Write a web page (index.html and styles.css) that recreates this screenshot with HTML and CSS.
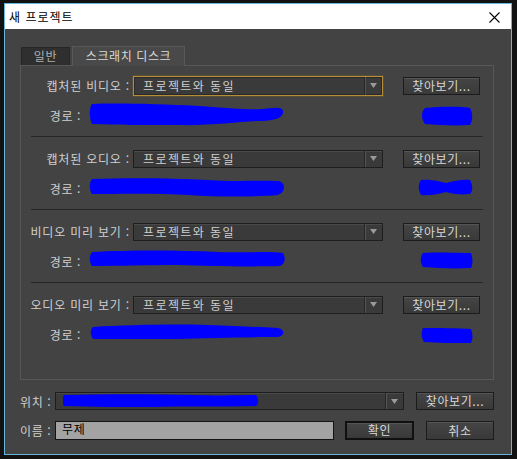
FILE: index.html
```html
<!DOCTYPE html>
<html lang="ko">
<head>
<meta charset="utf-8">
<title>새 프로젝트</title>
<link rel="stylesheet" href="styles.css">
</head>
<body>
<div class="window">
  <div class="titlebar">
    <span class="title">새 프로젝트</span>
    <svg class="close" width="11" height="11" viewBox="0 0 11 11"><path d="M0.5 0.5 L10.5 10.5 M10.5 0.5 L0.5 10.5" stroke="#000" stroke-width="1.1" fill="none"/></svg>
  </div>
  <div class="content">
    <div class="tabs">
      <div class="tab">일반</div>
      <div class="tab active">스크래치 디스크</div>
    </div>
    <div class="panel">
      <div class="disk">
        <div class="row">
          <span class="label wide">캡처된 비디오 :</span>
          <div class="select focus"><span class="select-text">프로젝트와 동일</span><span class="select-arrow"><svg width="7" height="5" viewBox="0 0 7 5"><path d="M0 0 H7 L3.5 5 Z" fill="#9a9a9a"/></svg></span></div>
          <div class="button browse">찾아보기...</div>
        </div>
        <div class="path">
          <span class="label short">경로 :</span>
          <svg class="scribble" width="394" height="24" viewBox="0 0 394 24">
            <path d="M4 1 C30 0 70 1 110 3 C140 5 160 7 175 6 C185 5 194 3 195 8 C196 15 186 18 170 18 C150 19 120 23 90 22 C60 22 25 22 4 21 C1 15 1 5 4 1 Z" fill="#0000ff"/>
            <path d="M337 5 C350 4 370 3 382 5 C385 11 385 17 382 22 C365 23 350 22 337 21 C333 16 333 9 337 5 Z" fill="#0000ff"/>
          </svg>
        </div>
        <div class="sep"></div>
      </div>
      <div class="disk">
        <div class="row">
          <span class="label wide">캡처된 오디오 :</span>
          <div class="select"><span class="select-text">프로젝트와 동일</span><span class="select-arrow"><svg width="7" height="5" viewBox="0 0 7 5"><path d="M0 0 H7 L3.5 5 Z" fill="#9a9a9a"/></svg></span></div>
          <div class="button browse">찾아보기...</div>
        </div>
        <div class="path">
          <span class="label short">경로 :</span>
          <svg class="scribble" width="394" height="24" viewBox="0 0 394 24">
            <path d="M4 3 C40 2 80 2 120 4 C150 6 175 4 190 5 C198 6 198 16 190 19 C170 21 130 21 100 19 C70 17 30 18 4 18 C1 13 1 7 4 3 Z" fill="#0000ff"/>
            <path d="M333 4 C345 3 352 6 358 7 C366 5 375 3 382 4 C385 9 385 15 382 18 C372 19 365 18 358 16 C350 18 342 20 333 19 C330 14 330 8 333 4 Z" fill="#0000ff"/>
          </svg>
        </div>
        <div class="sep"></div>
      </div>
      <div class="disk">
        <div class="row">
          <span class="label wide">비디오 미리 보기 :</span>
          <div class="select"><span class="select-text">프로젝트와 동일</span><span class="select-arrow"><svg width="7" height="5" viewBox="0 0 7 5"><path d="M0 0 H7 L3.5 5 Z" fill="#9a9a9a"/></svg></span></div>
          <div class="button browse">찾아보기...</div>
        </div>
        <div class="path">
          <span class="label short">경로 :</span>
          <svg class="scribble" width="394" height="24" viewBox="0 0 394 24">
            <path d="M4 3 C40 1 90 1 130 3 C160 4 180 2 195 4 C198 9 197 15 192 17 C160 18 120 17 90 16 C60 16 30 17 4 17 C1 12 1 7 4 3 Z" fill="#0000ff"/>
            <path d="M335 4 C350 3 370 4 383 4 C385 10 385 15 383 19 C365 20 350 19 335 18 C332 13 332 8 335 4 Z" fill="#0000ff"/>
          </svg>
        </div>
        <div class="sep"></div>
      </div>
      <div class="disk last">
        <div class="row">
          <span class="label wide">오디오 미리 보기 :</span>
          <div class="select"><span class="select-text">프로젝트와 동일</span><span class="select-arrow"><svg width="7" height="5" viewBox="0 0 7 5"><path d="M0 0 H7 L3.5 5 Z" fill="#9a9a9a"/></svg></span></div>
          <div class="button browse">찾아보기...</div>
        </div>
        <div class="path">
          <span class="label short">경로 :</span>
          <svg class="scribble" width="394" height="24" viewBox="0 0 394 24">
            <path d="M5 5 C40 3 80 2 120 3 C150 4 170 5 190 6 C197 7 197 14 190 15 C160 15 120 16 90 17 C60 17 30 17 5 17 C2 12 2 8 5 5 Z" fill="#0000ff"/>
            <path d="M335 6 C350 6 370 6 383 7 C385 12 385 17 383 21 C365 21 350 21 336 20 C333 15 333 10 335 6 Z" fill="#0000ff"/>
          </svg>
        </div>
      </div>
    </div>
    <div class="bottom-row">
      <span class="label bottom-label">위치 :</span>
      <div class="select location"><span class="select-text"><svg width="200" height="14" viewBox="0 0 200 14"><path d="M1 1 C40 0 90 0 130 1 C160 2 180 1 193 1 C196 5 196 10 193 12 C160 13 120 12 90 13 C60 13 30 13 1 12 C-1 9 -1 5 1 1 Z" fill="#0000ff"/></svg></span><span class="select-arrow"><svg width="7" height="5" viewBox="0 0 7 5"><path d="M0 0 H7 L3.5 5 Z" fill="#9a9a9a"/></svg></span></div>
      <div class="button browse wide-btn">찾아보기...</div>
    </div>
    <div class="bottom-row name-row">
      <span class="label bottom-label">이름 :</span>
      <div class="textfield">무제</div>
      <div class="button ok">확인</div>
      <div class="button cancel">취소</div>
    </div>
  </div>
</div>
</body>
</html>
```

FILE: styles.css
```css
* { box-sizing: border-box; }
html, body { margin: 0; padding: 0; }
body {
  width: 517px;
  height: 459px;
  background: #121212;
  font-family: "Noto Sans CJK KR", "Noto Sans", sans-serif;
  font-size: 12px;
  letter-spacing: 0.6px;
  overflow: hidden;
}
.window {
  margin: 3px 0 0 4px;
  width: 508px;
  height: 452px;
  border: 1px solid #66b7dc;
  display: flex;
  flex-direction: column;
  background: #434343;
}
.titlebar {
  height: 25px;
  background: #fff;
  display: flex;
  align-items: center;
  justify-content: space-between;
  padding: 0 11px 0 4px;
  flex: none;
}
.title { color: #000; font-size: 12px; line-height: 1; letter-spacing: 1px; }
.close { display: block; margin-top: 1px; }
.content {
  flex: 1;
  padding: 17px 17px 0 15px;
  color: #cfcfcf;
}
.tabs {
  display: flex;
  align-items: flex-end;
  height: 19px;
  padding-left: 1px;
  gap: 2px;
  position: relative;
  z-index: 1;
}
.tab {
  height: 18px;
  line-height: 16px;
  text-align: center;
  font-size: 12px;
  color: #b0b0b0;
  background: #2f2f2f;
  border: 1px solid #262626;
  border-bottom: none;
  width: 49px;
}
.tab.active {
  width: 113px;
  height: 20px;
  margin-bottom: -1px;
  background: #494949;
  border: 1px solid #585858;
  border-bottom: none;
  color: #dadada;
  line-height: 18px;
}
.panel {
  width: 474px;
  height: 315px;
  border: 1px solid #575757;
  padding: 10px 10px 0 0;
}
.disk { display: flex; flex-direction: column; }
.row {
  display: flex;
  align-items: center;
  height: 19px;
}
.label { color: #cfcfcf; white-space: nowrap; }
.label.wide {
  width: 110px;
  text-align: right;
  padding-right: 1px;
  margin-right: 2px;
  letter-spacing: 0.8px;
}
.select {
  width: 250px;
  height: 18px;
  display: flex;
  align-items: stretch;
  background: #3a3a3a;
  border: 1px solid #1e1e1e;
  box-shadow: inset 0 1px 0 #4a4a4a;
}
.select.focus {
  border: 1px solid #b58e3a;
  box-shadow: 0 0 0 0.5px #6e5a2c, inset 0 0 0 1px #2a2a2a;
  height: 20px;
}
.select-text {
  flex: 1;
  padding-left: 9px;
  line-height: 16px;
  color: #d0d0d0;
  display: flex;
  align-items: center;
  letter-spacing: 1.4px;
}
.select-arrow {
  width: 18px;
  border-left: 1px solid #262626;
  box-shadow: inset 1px 0 0 #555;
  display: flex;
  align-items: center;
  justify-content: center;
}
.select-arrow svg { display: block; }
.button {
  height: 18px;
  border: 1px solid #1c1c1c;
  background: linear-gradient(#454545, #393939);
  box-shadow: inset 0 1px 0 #555;
  color: #d8d8d8;
  text-align: center;
  line-height: 16px;
  font-size: 12px;
}
.browse { width: 77px; margin-left: 20px; }
.path {
  display: flex;
  align-items: center;
  height: 20px;
  margin-top: 10px;
}
.label.short { width: 60px; text-align: right; }
.scribble { display: block; margin-left: 7px; flex: none; }
.sep {
  height: 1px;
  margin: 11px 0 12px 10px;
  background: #262626;
}
.bottom-row {
  display: flex;
  align-items: center;
  height: 18px;
  margin-top: 12px;
}
.bottom-label { width: 35px; }
.select.location { width: 349px; }
.select.location .select-text { padding-left: 7px; }
.select.location svg { display: block; }
.wide-btn { width: 78px; margin-left: 12px; }
.name-row { margin-top: 11px; height: 19px; }
.textfield {
  width: 279px;
  height: 19px;
  background: #a3a3a3;
  border: 1px solid #141414;
  color: #000;
  padding-left: 6px;
  line-height: 13px;
  font-size: 12px;
}
.ok {
  width: 69px;
  height: 19px;
  margin-left: 11px;
  border: 2px solid #101010;
  line-height: 14px;
}
.cancel {
  width: 68px;
  height: 19px;
  margin-left: 12px;
  line-height: 17px;
}
```
